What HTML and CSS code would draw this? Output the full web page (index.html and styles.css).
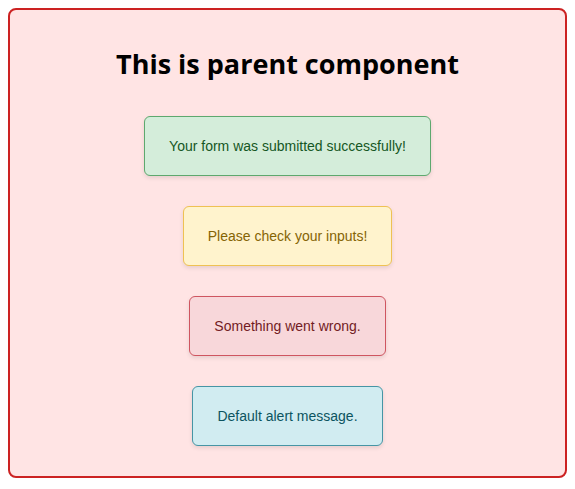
FILE: index.html
```html
<!DOCTYPE html>
<html>
<head>
<meta charset="utf-8">
<link rel="stylesheet" href="styles.css">
</head>
<body>
<div class="parent">
  <h1 class="title">This is parent component</h1>
  <div class="alerts">
    <div class="alert success">Your form was submitted successfully!</div>
    <div class="alert warning">Please check your inputs!</div>
    <div class="alert danger">Something went wrong.</div>
    <div class="alert info">Default alert message.</div>
  </div>
</div>
</body>
</html>
```
FILE: styles.css
```css
html, body { margin: 0; padding: 0; background: #fff; }
body { margin: 8px; }
.parent {
  border: 2px solid #cc2222;
  border-radius: 8px;
  background: #ffe4e4;
  padding: 20px 20px 30px;
  height: 470px;
  box-sizing: border-box;
}
.title {
  font-family: "Open Sans", "Noto Sans", sans-serif;
  font-weight: 700;
  font-size: 27px;
  text-align: center;
  margin: 16px 0 34px;
  line-height: 36px;
  color: #000;
}
.alerts {
  display: flex;
  flex-direction: column;
  align-items: center;
  gap: 30px;
}
.alert {
  font-family: "Liberation Sans", Arial, sans-serif;
  font-size: 14px;
  line-height: 18px;
  padding: 20px 24px;
  border: 1px solid;
  border-radius: 6px;
  box-shadow: 0 2px 4px rgba(0,0,0,0.1);
}
.success { background: #d4edda; border-color: #5ea86e; color: #155724; }
.warning { background: #fff3cd; border-color: #efc153; color: #856404; }
.danger { background: #f8d7da; border-color: #cf5560; color: #721c24; }
.info { background: #d1ecf1; border-color: #4695a5; color: #0c5460; }
```
